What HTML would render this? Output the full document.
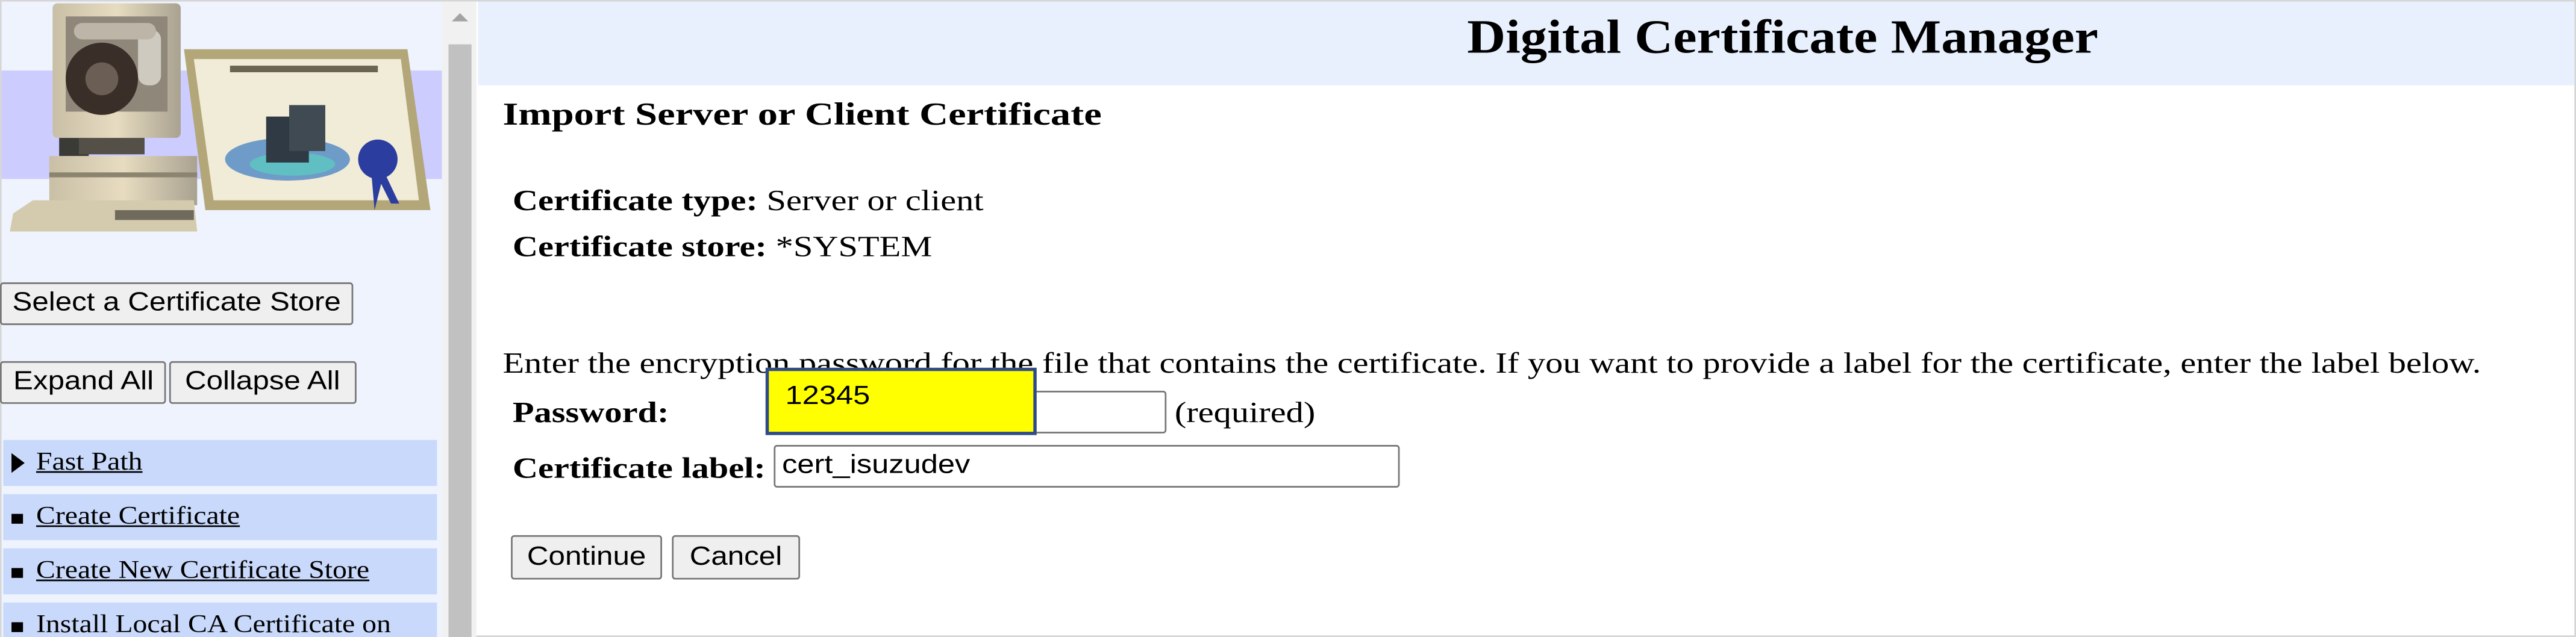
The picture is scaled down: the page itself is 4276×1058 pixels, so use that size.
<!DOCTYPE html>
<html><head><meta charset="utf-8"><style>
html,body{margin:0;padding:0;background:#fff;overflow:hidden}
#wrap{position:absolute;left:0;top:0;width:1568px;height:388px;transform:scale(2.72704,2.72680);transform-origin:0 0;overflow:hidden;background:#fff}
.abs{position:absolute}
.serif{font-family:"Liberation Serif",serif;color:#000;transform:scaleX(1.19);transform-origin:0 0;white-space:nowrap}
.sans{font-family:"Liberation Sans",sans-serif;color:#000;transform:scaleX(1.16);transform-origin:0 0;white-space:nowrap}
.btn{position:absolute;box-sizing:border-box;background:#efefef;border:1px solid #767676;border-radius:2px;font-family:"Liberation Sans",sans-serif;font-size:16px;line-height:24px;text-align:center;color:#000;white-space:nowrap}
.btn span{display:inline-block;transform:scaleX(1.13)}
.nav{position:absolute;left:2px;width:264px;height:28px;background:#c9d9fb;font-family:"Liberation Serif",serif;font-size:15.5px;line-height:28px}
.nav .t{position:absolute;left:20px;transform:scaleX(1.13);transform-origin:0 0;white-space:nowrap}
.inp{position:absolute;box-sizing:border-box;background:#fff;border:1px solid #767676;border-radius:2px}
</style></head><body><div id="wrap">
<div class="abs" style="left:0;top:0;width:1566px;height:386px;border:1px solid #d6d6d6"></div>
<div class="abs" style="left:1px;top:1px;width:268px;height:387px;background:#eef3fe"></div>
<div class="abs" style="left:1px;top:43px;width:268px;height:66px;background:#ccccff"></div>
<svg class="abs" style="left:0;top:0" width="270" height="150" viewBox="0 0 270 150">
 <defs><linearGradient id="mg" x1="0" x2="1"><stop offset="0" stop-color="#c9bfa6"/><stop offset=".5" stop-color="#e7dcc0"/><stop offset="1" stop-color="#a9a290"/></linearGradient></defs>
 <polygon points="112,30 248,30 262,128 125,128" fill="#b3a779"/>
 <polygon points="118,36 244,36 255,122 130,122" fill="#f1ecd8"/>
 <rect x="140" y="40" width="90" height="4" fill="#6a6450"/>
 <ellipse cx="175" cy="97" rx="38" ry="13" fill="#6f9bc8"/>
 <ellipse cx="178" cy="100" rx="26" ry="7" fill="#5fbfc2"/>
 <rect x="162" y="71" width="26" height="28" fill="#2f3a44"/>
 <rect x="176" y="64" width="22" height="28" fill="#3f4a52"/>
 <circle cx="230" cy="97" r="12" fill="#2b3d9e"/>
 <polygon points="226,105 234,105 243,124 238,124 232,112 228,128" fill="#2b3d9e"/>
 <rect x="32" y="2" width="78" height="82" rx="3" fill="url(#mg)"/>
 <rect x="40" y="10" width="62" height="58" fill="#8f877a"/>
 <circle cx="62" cy="48" r="22" fill="#3a2e28"/>
 <circle cx="62" cy="48" r="10" fill="#6b5f55"/>
 <rect x="84" y="18" width="14" height="34" rx="6" fill="#cfcac0"/>
 <rect x="45" y="14" width="50" height="10" rx="5" fill="#bdb6a8"/>
 <rect x="36" y="84" width="18" height="12" fill="#3a3a36"/>
 <rect x="48" y="84" width="40" height="10" fill="#545048"/>
 <rect x="30" y="95" width="90" height="30" fill="url(#mg)"/>
 <rect x="30" y="105" width="90" height="3" fill="#8b846f"/>
 <polygon points="8,130 20,122 118,122 120,141 6,141" fill="#d4caae"/>
 <rect x="70" y="128" width="48" height="6" fill="#6f6a5c"/>
</svg>
<div class="btn" style="left:0;top:172px;width:215px;height:26px"><span>Select a Certificate Store</span></div>
<div class="btn" style="left:0;top:220px;width:101px;height:26px"><span>Expand All</span></div>
<div class="btn" style="left:103px;top:220px;width:114px;height:26px"><span>Collapse All</span></div>
<div class="nav" style="top:268px"><span style="position:absolute;left:5px;top:8px;width:0;height:0;border-left:8px solid #000;border-top:6px solid transparent;border-bottom:6px solid transparent"></span><u class="t">Fast Path</u></div>
<div class="nav" style="top:301px"><span style="position:absolute;left:5px;top:12px;width:7px;height:6px;background:#000"></span><u class="t">Create Certificate</u></div>
<div class="nav" style="top:334px"><span style="position:absolute;left:5px;top:12px;width:7px;height:6px;background:#000"></span><u class="t">Create New Certificate Store</u></div>
<div class="nav" style="top:367px"><span style="position:absolute;left:5px;top:12px;width:7px;height:6px;background:#000"></span><span class="t">Install Local CA Certificate on</span></div>
<div class="abs" style="left:269px;top:1px;width:21px;height:387px;background:#f1f1f1"></div>
<div class="abs" style="left:273px;top:27px;width:14px;height:361px;background:#c1c1c1"></div>
<div class="abs" style="left:275px;top:8px;width:0;height:0;border-bottom:5px solid #a3a3a3;border-left:5px solid transparent;border-right:5px solid transparent"></div>
<div class="abs" style="left:291px;top:1px;width:1276px;height:51px;background:#e8f0fe"></div>
<div class="abs serif" style="left:893px;top:5px;font-size:29px;font-weight:bold;line-height:36px;transform:scaleX(1.12)">Digital Certificate Manager</div>
<div class="abs serif" style="left:306px;top:59px;font-size:19.5px;font-weight:bold;line-height:24px;transform:scaleX(1.25)">Import Server or Client Certificate</div>
<div class="abs serif" style="left:312px;top:111px;font-size:18px;line-height:22px"><b>Certificate type:</b> Server or client</div>
<div class="abs serif" style="left:312px;top:139px;font-size:18px;line-height:22px"><b>Certificate store:</b> *SYSTEM</div>
<div class="abs serif" style="left:306px;top:210px;font-size:18px;line-height:22px">Enter the encryption password for the file that contains the certificate. If you want to provide a label for the certificate, enter the label below.</div>
<div class="abs serif" style="left:312px;top:240px;font-size:18px;line-height:22px;font-weight:bold">Password:</div>
<div class="inp" style="left:466px;top:238px;width:244px;height:26px"></div>
<div class="abs serif" style="left:715px;top:240px;font-size:18px;line-height:22px">(required)</div>
<div class="abs" style="left:466px;top:224px;width:165px;height:41px;box-sizing:border-box;background:#ffff00;border:2px solid #2f4a8a"></div>
<div class="abs sans" style="left:478px;top:232px;font-size:16px;line-height:20px">12345</div>
<div class="abs serif" style="left:312px;top:274px;font-size:18px;line-height:22px;font-weight:bold">Certificate label:</div>
<div class="inp" style="left:471px;top:271px;width:381px;height:26px"></div>
<div class="abs sans" style="left:476px;top:274px;font-size:16px;line-height:20px">cert_isuzudev</div>
<div class="btn" style="left:311px;top:326px;width:92px;height:27px;line-height:25px"><span>Continue</span></div>
<div class="btn" style="left:409px;top:326px;width:78px;height:27px;line-height:25px"><span>Cancel</span></div>
</div></body></html>
